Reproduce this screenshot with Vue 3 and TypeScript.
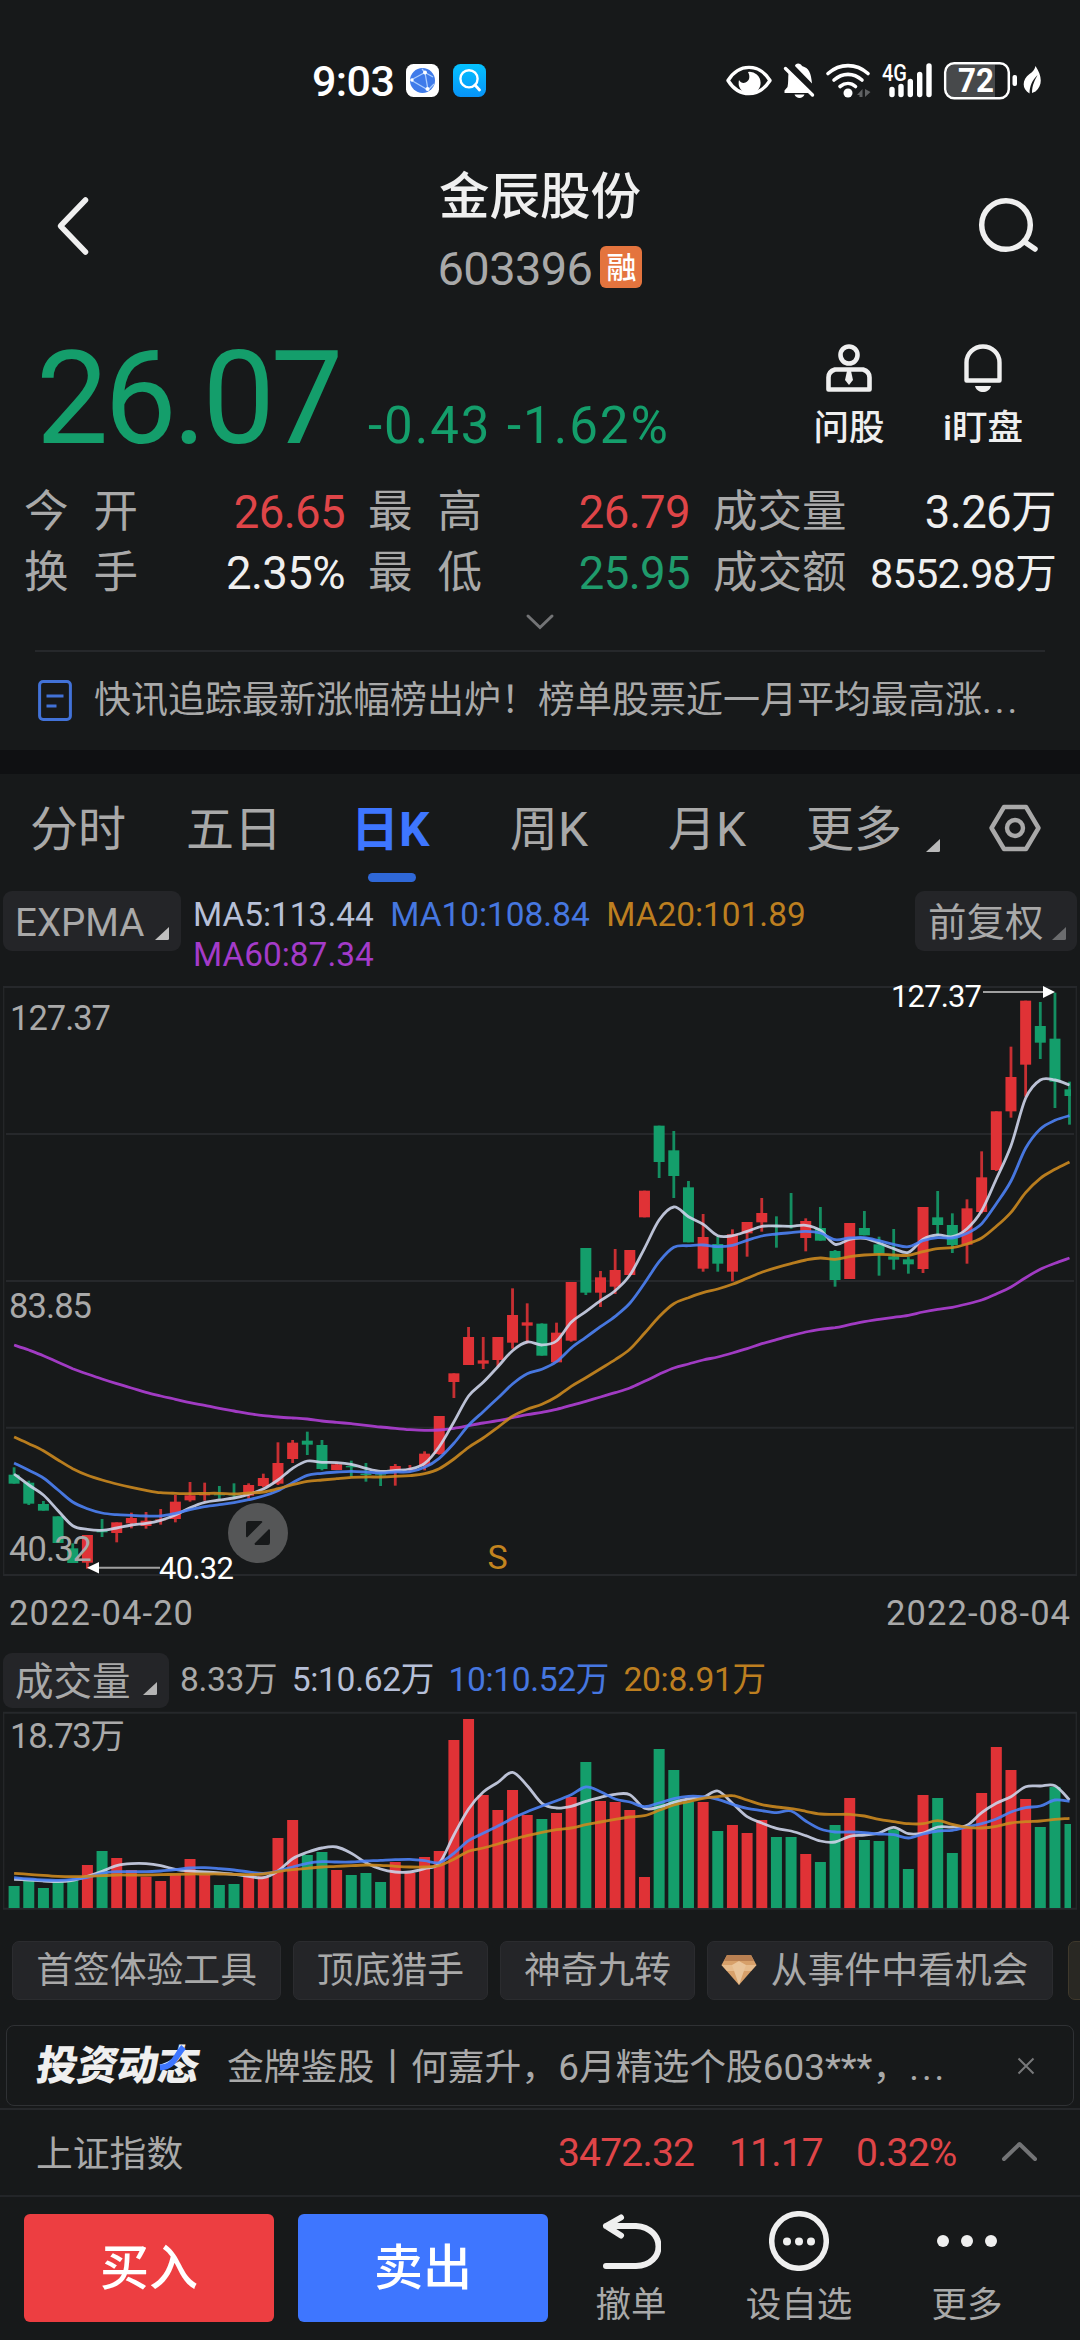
<script setup lang="ts">
type Candle = [rise: 0 | 1, high: number, top: number, bottom: number, low: number]

// Vertical chart values are kept in thirds of a pixel
const UNIT = 3
const PITCH = 14.66
const FIRST_X = 14.1

const candles: Candle[] = [
  [0, 1462, 1484, 1511, 1511], [0, 1502, 1508, 1571, 1575], [0, 1563, 1572, 1592, 1592], [0, 1609, 1609, 1689, 1689],
  [0, 1690, 1705, 1749, 1749], [1, 1665, 1665, 1748, 1766], [0, 1617, 1652, 1657, 1671], [1, 1627, 1627, 1659, 1687],
  [1, 1598, 1614, 1630, 1645], [1, 1596, 1622, 1638, 1646], [1, 1587, 1618, 1621, 1634], [1, 1545, 1565, 1617, 1627],
  [1, 1506, 1546, 1561, 1565], [1, 1508, 1542, 1546, 1562], [0, 1518, 1543, 1546, 1556], [0, 1510, 1543, 1546, 1556],
  [1, 1510, 1515, 1547, 1556], [1, 1481, 1494, 1518, 1522], [1, 1387, 1449, 1511, 1515], [1, 1380, 1388, 1437, 1449],
  [0, 1355, 1382, 1394, 1425], [0, 1380, 1395, 1467, 1471], [1, 1450, 1453, 1470, 1470], [0, 1442, 1458, 1462, 1490],
  [0, 1449, 1481, 1485, 1505], [0, 1480, 1483, 1486, 1518], [1, 1452, 1458, 1476, 1517], [1, 1455, 1467, 1470, 1476],
  [1, 1414, 1421, 1458, 1471], [1, 1308, 1308, 1422, 1424], [1, 1180, 1180, 1206, 1254], [1, 1041, 1071, 1155, 1155],
  [1, 1071, 1141, 1151, 1167], [1, 1071, 1071, 1140, 1160], [1, 925, 1005, 1088, 1106], [1, 970, 1027, 1037, 1090],
  [0, 1030, 1031, 1127, 1127], [1, 1028, 1058, 1147, 1147], [1, 906, 906, 1082, 1085], [0, 804, 804, 938, 945],
  [1, 873, 892, 938, 981], [1, 807, 870, 920, 942], [1, 810, 810, 885, 885], [1, 632, 632, 712, 712],
  [0, 437, 437, 546, 594], [0, 453, 511, 588, 654], [0, 603, 622, 787, 787], [1, 702, 771, 866, 875],
  [0, 770, 792, 851, 875], [1, 748, 763, 875, 904], [1, 726, 726, 760, 830], [1, 654, 699, 727, 755],
  [0, 709, 736, 740, 803], [0, 639, 736, 740, 746], [1, 715, 723, 774, 814], [0, 681, 744, 782, 782],
  [0, 810, 813, 900, 920], [1, 729, 729, 897, 897], [0, 693, 744, 766, 766], [0, 770, 793, 821, 887],
  [0, 747, 829, 839, 869], [0, 830, 838, 853, 881], [1, 681, 681, 867, 879], [0, 633, 712, 735, 765],
  [0, 700, 735, 795, 819], [1, 658, 685, 794, 851], [1, 514, 592, 696, 700], [1, 394, 394, 570, 573],
  [1, 200, 291, 394, 413], [1, 62, 62, 254, 350], [0, 66, 138, 188, 237], [0, 38, 176, 305, 384],
  [0, 305, 328, 348, 434],
]

const volumeTops: number[] = [
  738, 722, 744, 726, 722, 675, 633, 654, 690, 710, 723, 703, 657, 705, 735, 732, 703, 709, 594, 540, 645, 636, 690,
  705, 699, 726, 666, 699, 651, 633, 300, 237, 465, 510, 450, 525, 537, 519, 471, 366, 483, 486, 510, 711, 327, 390,
  485, 486, 573, 555, 579, 540, 591, 591, 642, 666, 555, 474, 600, 603, 568, 687, 465, 474, 639, 562, 459, 321, 390,
  477, 561, 441, 552,
]

const priceLines = [
  {
    color: '#b03fd6',
    points: [1095, 1110, 1127, 1147, 1166, 1182, 1197, 1211, 1224, 1237, 1248, 1258, 1268, 1276, 1285, 1293, 1301, 1307, 1311, 1314, 1317, 1323, 1327, 1331, 1336, 1341, 1345, 1349, 1351, 1350, 1345, 1337, 1329, 1322, 1313, 1304, 1297, 1288, 1276, 1264, 1251, 1238, 1224, 1204, 1183, 1164, 1152, 1140, 1131, 1119, 1106, 1091, 1079, 1067, 1056, 1048, 1043, 1034, 1025, 1018, 1012, 1006, 996, 988, 982, 972, 960, 942, 921, 893, 868, 850, 834],
  },
  {
    color: '#cdd4ea',
    points: [1482, 1515, 1545, 1592, 1637, 1648, 1651, 1644, 1635, 1630, 1621, 1605, 1583, 1567, 1560, 1554, 1543, 1527, 1500, 1465, 1443, 1447, 1448, 1453, 1465, 1474, 1471, 1467, 1450, 1400, 1326, 1248, 1207, 1160, 1112, 1086, 1095, 1083, 1027, 995, 962, 932, 886, 805, 720, 681, 710, 733, 767, 767, 754, 739, 738, 739, 736, 751, 793, 778, 775, 789, 806, 817, 778, 765, 770, 746, 692, 597, 497, 355, 300, 300, 315],
  },
  {
    color: '#4d82f5',
    points: [1449, 1471, 1494, 1530, 1566, 1586, 1599, 1604, 1606, 1608, 1608, 1600, 1589, 1580, 1574, 1568, 1559, 1548, 1532, 1508, 1486, 1480, 1476, 1474, 1476, 1479, 1476, 1475, 1462, 1435, 1390, 1336, 1295, 1254, 1212, 1181, 1168, 1145, 1104, 1072, 1040, 1009, 970, 910, 845, 802, 797, 795, 800, 796, 781, 768, 762, 758, 754, 759, 779, 774, 773, 782, 793, 800, 782, 773, 774, 760, 731, 671, 603, 505, 447, 421, 407],
  },
  {
    color: '#cb881f',
    points: [1371, 1391, 1412, 1440, 1466, 1486, 1500, 1512, 1522, 1531, 1538, 1540, 1541, 1540, 1540, 1542, 1539, 1536, 1526, 1514, 1504, 1500, 1496, 1492, 1491, 1491, 1489, 1487, 1481, 1466, 1437, 1402, 1374, 1342, 1309, 1288, 1273, 1250, 1219, 1193, 1166, 1139, 1108, 1060, 1010, 971, 953, 938, 927, 913, 895, 877, 863, 851, 840, 834, 838, 830, 825, 823, 825, 826, 815, 806, 803, 792, 774, 739, 697, 638, 595, 568, 546],
  },
]

const volumeLines = [
  {
    color: '#cdd4ea',
    points: [718, 720, 723, 725, 721, 709, 694, 677, 671, 671, 677, 688, 693, 696, 699, 703, 709, 713, 693, 656, 637, 624, 621, 640, 668, 687, 696, 696, 686, 670, 585, 507, 456, 427, 397, 437, 490, 504, 499, 484, 472, 463, 464, 505, 501, 487, 477, 472, 453, 490, 530, 549, 565, 573, 587, 603, 606, 589, 585, 579, 562, 581, 579, 561, 561, 556, 518, 490, 470, 440, 438, 437, 480],
  },
  {
    color: '#4d82f5',
    points: [713, 717, 720, 721, 718, 712, 700, 695, 695, 695, 693, 689, 684, 683, 686, 690, 696, 700, 693, 681, 670, 665, 666, 666, 663, 661, 659, 658, 662, 668, 640, 602, 580, 558, 535, 515, 498, 482, 464, 441, 455, 477, 486, 500, 489, 476, 469, 470, 478, 493, 505, 512, 518, 513, 543, 567, 576, 576, 578, 582, 584, 594, 582, 573, 571, 561, 551, 537, 516, 503, 498, 480, 484],
  },
  {
    color: '#cb881f',
    points: [700, 703, 706, 709, 710, 709, 707, 705, 705, 705, 704, 703, 702, 702, 702, 703, 704, 702, 695, 689, 685, 681, 679, 677, 675, 676, 679, 681, 681, 677, 658, 634, 624, 612, 599, 587, 577, 569, 564, 554, 546, 538, 531, 527, 511, 495, 485, 475, 470, 467, 480, 494, 501, 506, 514, 522, 523, 523, 528, 538, 545, 551, 551, 542, 553, 562, 564, 559, 549, 545, 543, 538, 535],
  },
]

const xAt = (i: number): number => Math.min(FIRST_X + PITCH * i, 1069.5)
const widthAt = (i: number): number => (i === candles.length - 1 ? 6.5 : 11)
const leftAt = (i: number): number => (i === candles.length - 1 ? 1064.5 : xAt(i) - 5.5)
const colorOf = (c: Candle): string => (c[0] ? '#e03236' : '#149e6b')

function smoothPath(points: number[]): string {
  const pts = points.map((v, i) => [xAt(i), v / UNIT])
  let d = `M${pts[0][0]} ${pts[0][1]}`
  for (let i = 0; i < pts.length - 1; i++) {
    const before = pts[Math.max(i - 1, 0)]
    const from = pts[i]
    const to = pts[i + 1]
    const after = pts[Math.min(i + 2, pts.length - 1)]
    const c1 = [from[0] + (to[0] - before[0]) / 6, from[1] + (to[1] - before[1]) / 6]
    const c2 = [to[0] - (after[0] - from[0]) / 6, to[1] - (after[1] - from[1]) / 6]
    d += `C${c1.map((n) => n.toFixed(1))} ${c2.map((n) => n.toFixed(1))} ${to[0].toFixed(1)} ${to[1].toFixed(1)}`
  }
  return d
}

const stats = [
  { label: '今开', value: '26.65', tone: 'up', spread: true },
  { label: '最高', value: '26.79', tone: 'up', spread: true },
  { label: '成交量', value: '3.26万', tone: 'plain', spread: false },
  { label: '换手', value: '2.35%', tone: 'plain', spread: true },
  { label: '最低', value: '25.95', tone: 'down', spread: true },
  { label: '成交额', value: '8552.98万', tone: 'plain small', spread: false },
]
const periods = ['分时', '五日', '日K', '周K', '月K', '更多']
const tools = ['首签体验工具', '顶底猎手', '神奇九转']
</script>

<template>
  <main class="screen">
    <div class="status">
      <span class="clock">9:03</span>
      <svg class="app-a" width="33" height="33" viewBox="0 0 33 33">
        <rect width="33" height="33" rx="7.5" fill="#fff" />
        <circle cx="16.5" cy="16.5" r="12.5" fill="#3f7bea" />
        <path d="M5 16 19 8.5 22 26ZM5 16 22 26M19 8.5 27 13M16 5 19 8.5M22 26 28 20" fill="none" stroke="#a9ccff" stroke-width="1.3" />
        <circle cx="19" cy="8.5" r="2" fill="#fff" /><circle cx="6" cy="16" r="1.7" fill="#fff" /><circle cx="21.5" cy="25" r="2" fill="#fff" />
      </svg>
      <svg class="app-b" width="33" height="33" viewBox="0 0 33 33">
        <defs><linearGradient id="sky" x2="0" y2="1"><stop stop-color="#05c2ff" /><stop offset="1" stop-color="#0793f8" /></linearGradient></defs>
        <rect width="33" height="33" rx="7.5" fill="url(#sky)" />
        <circle cx="16" cy="14.8" r="8.6" fill="none" stroke="#fff" stroke-width="2.4" />
        <path d="m22 21 4.5 5" stroke="#fff" stroke-width="2.8" stroke-linecap="round" />
      </svg>
      <svg class="indicators" width="320" height="60" viewBox="721 51 320 60">
        <path d="M727 80.5C738 63 758 63 769 80.5 758 98 738 98 727 80.5Z" fill="none" stroke="#fff" stroke-width="3.4" stroke-linejoin="round" />
        <path d="M747 72a11 11 0 1 1-9 8c1.500 2.500 4 3.500 6.500 2.500 4-1.500 5-6 2.500-10.500Z" fill="#fff" />
        <path d="M794 66c0-3.500 6-3.500 7 0 7 2 9 6.500 10 17.500ZM787.500 73 808 93h-24.500v-2.500l3-3.500c1-4 .5-9 1-14Z" fill="#fff" />
        <path d="m784.500 68.500 27 26.500" stroke="#fff" stroke-width="3.4" stroke-linecap="round" />
        <path d="M793.500 94.500h10c-1.500 4.500-8.500 4.500-10 0Z" fill="#fff" />
        <g fill="none" stroke="#fff" stroke-width="3.600" stroke-linecap="round">
          <path d="M827 73.500c12-10.500 28-10.500 40 0M833 80c8.500-7.500 19.500-7.500 28 0M839 86.500c5-4 11-4 15.500 0" />
        </g>
        <circle cx="847" cy="93" r="4.500" fill="#fff" />
        <path d="m861.500 89-5.500 6h2.500v2h3Zm2.500 0 5.500 3-5.500 5Z" fill="#606264" />
        <text x="881" y="80.500" class="net" textLength="25" lengthAdjust="spacingAndGlyphs">4G</text>
        <g stroke="#fff" stroke-width="5.400" stroke-linecap="round"><path d="M891 89.500v5M900 86.500v8M909.300 81.500v13M918.700 74.500v20M928 66v28.500" /></g>
        <path d="M953 64.500h41v32.500h-41a7 7 0 0 1-7-7V71.500a7 7 0 0 1 7-7Z" fill="#47494b" />
        <rect x="944.200" y="63.200" width="63.600" height="35" rx="9" fill="none" stroke="#fff" stroke-width="2.500" />
        <text x="957" y="92.300" class="battery" textLength="36" lengthAdjust="spacingAndGlyphs">72</text>
        <rect x="1011.500" y="75" width="4.500" height="11" rx="2" fill="#fff" />
        <path d="M1034.500 66c6 9 8 19 0 25.500l-3.500 1.500c0-8 3-13 5.500-18-5 5-8 11-8 18.500-8-4.500-7.500-14 0-19.500 3-2 5-4 6-8Z" fill="#fff" />
      </svg>
    </div>

    <header class="header">
      <svg class="back" width="36" height="62" viewBox="0 0 36 62"><path d="M31.500 5 6.500 31l25 26" fill="none" stroke="#efefef" stroke-width="5.500" stroke-linecap="round" stroke-linejoin="round" /></svg>
      <div class="title">
        <h1>金辰股份</h1>
        <div class="code"><span>603396</span><b>融</b></div>
      </div>
      <svg class="search" width="66" height="62" viewBox="0 0 66 62"><circle cx="29" cy="31" r="24.300" fill="none" stroke="#efefef" stroke-width="5.500" /><path d="m47 47.500 11 7.500" stroke="#efefef" stroke-width="5.500" stroke-linecap="round" /></svg>
    </header>

    <section class="quote">
      <strong class="price">26.07</strong>
      <span class="change first">-0.43</span>
      <span class="change">-1.62%</span>
      <div class="actions">
        <div class="action">
          <svg width="50" height="48" viewBox="0 0 50 48" fill="none" stroke="#efefef" stroke-width="4.600">
            <circle cx="25" cy="11" r="8.500" />
            <path d="M11 25.500h28q6.500 2 6.500 8V45.500h-41v-12q0-6 6.500-8Z" stroke-linejoin="round" />
            <path d="M23 27h4l2 9-4 5-4-5Z" fill="#efefef" stroke="none" />
          </svg>
          <span>问股</span>
        </div>
        <div class="action">
          <svg width="50" height="48" viewBox="0 0 50 48"><path d="M8.500 36.500V18.500a16.500 16 0 0 1 33 0v18Z" fill="none" stroke="#efefef" stroke-width="4.400" stroke-linejoin="round" /><path d="M17 42h16c-2 8-14 8-16 0Z" fill="#efefef" /></svg>
          <span>i盯盘</span>
        </div>
      </div>
    </section>

    <section class="stats">
      <div v-for="s in stats" :key="s.label" class="stat">
        <span class="label" :class="{ spread: s.spread }">{{ s.label }}</span>
        <span class="value" :class="s.tone">{{ s.value }}</span>
      </div>
    </section>
    <div class="expand"><svg width="30" height="18" viewBox="0 0 30 18"><path d="m3 3 12 11.500L27 3" fill="none" stroke="#737476" stroke-width="3" stroke-linecap="round" /></svg></div>

    <section class="news">
      <svg width="34" height="41" viewBox="0 0 34 41"><rect x="1.600" y="1.600" width="30.800" height="37.800" rx="3.500" fill="none" stroke="#4272d8" stroke-width="3" /><path d="M8.500 16h17M8.500 26h10" stroke="#4272d8" stroke-width="3" /></svg>
      <span>快讯追踪最新涨幅榜出炉！榜单股票近一月平均最高涨<i class="dots">...</i></span>
    </section>
    <div class="band"></div>

    <nav class="tabs">
      <span v-for="p in periods" :key="p" class="tab" :class="{ active: p === '日K' }">{{ p }}</span>
      <svg class="more-mark" width="14" height="13" viewBox="0 0 14 13"><path d="M14 0v11.500q0 1.500-1.500 1.500H0Z" fill="#b9b9b9" /></svg>
      <svg class="hex" width="52" height="48" viewBox="0 0 52 48" fill="none" stroke="#a9a9a9"><path d="M15 3h22l12.500 21L37 45H15L2.500 24Z" stroke-width="4.400" stroke-linejoin="round" /><circle cx="26" cy="24" r="8" stroke-width="4.400" /></svg>
    </nav>

    <section class="legend">
      <div class="pill main-pill"><span>EXPMA</span><svg width="14" height="13" viewBox="0 0 14 13"><path d="M14 0v11.500q0 1.500-1.500 1.500H0Z" fill="#c0c0c0" /></svg></div>
      <p class="averages"><span class="c5">MA5:113.44</span><span class="c10">MA10:108.84</span><span class="c20">MA20:101.89</span><span class="c60">MA60:87.34</span></p>
      <div class="pill right-pill"><span>前复权</span><svg width="14" height="13" viewBox="0 0 14 13"><path d="M14 0v11.500q0 1.500-1.500 1.500H0Z" fill="#6b6c6e" /></svg></div>
    </section>

    <svg class="chart" width="1080" height="666" viewBox="0 -6 1080 666">
      <g stroke="#26282b" stroke-width="2" fill="none">
        <path d="M3 7h1074M6 154h1068M6 301h1068M6 447.700h1068M3 595h1074" />
        <path d="M3.700 7v588M1076.300 7v588" stroke-width="1.200" />
      </g>
      <g v-for="(c, i) in candles" :key="i" :fill="colorOf(c)">
        <rect :x="xAt(i) - 1.4" :y="c[1] / UNIT" width="2.8" :height="(c[4] - c[1]) / UNIT" opacity=".88" />
        <rect :x="leftAt(i)" :y="c[2] / UNIT" :width="widthAt(i)" :height="(c[3] - c[2]) / UNIT" />
      </g>
      <path v-for="l in priceLines" :key="l.color" :d="smoothPath(l.points)" :stroke="l.color" class="line" />
      <g class="axis">
        <text x="10" y="50.300" textLength="101">127.37</text>
        <text x="9" y="338" textLength="83">83.85</text>
        <text x="9" y="580.700" textLength="83">40.32</text>
        <text x="9" y="645" textLength="184">2022-04-20</text>
        <text x="886" y="645" textLength="184">2022-08-04</text>
      </g>
      <path d="M983 12h62M99 587.700h61" stroke="#a0a0a0" stroke-width="2" />
      <path d="m1043 6 12 6-12 6ZM99 582l-12 5.700 12 5.800Z" fill="#fff" />
      <g class="extreme">
        <text x="891" y="27" textLength="91">127.37</text>
        <text x="159" y="598.700" textLength="75">40.32</text>
      </g>
      <circle cx="258" cy="553" r="30" fill="#555657" />
      <path d="M246 543.500q0-2.500 2-2.500h13.500l1 1L247 557.500l-1-1ZM270 562.500q0 2.500-2 2.500h-13l-.5-1.500L269 549l1 1Z" fill="#17191a" />
      <text x="487.500" y="588.700" class="sell">S</text>
    </svg>

    <section class="volume-head">
      <div class="pill volume-pill"><span>成交量</span><svg width="14" height="13" viewBox="0 0 14 13"><path d="M14 0v11.500q0 1.500-1.500 1.500H0Z" fill="#b4b4b4" /></svg></div>
      <span class="c0">8.33万</span><span class="c5">5:10.62万</span><span class="c10">10:10.52万</span><span class="c20">20:8.91万</span>
    </section>
    <svg class="chart" width="1080" height="205" viewBox="0 70 1080 205">
      <g stroke="#26282b" fill="none"><path d="M3 72.800h1074M3 268.800h1074" stroke-width="2" /><path d="M3.700 72.800v196M1076.300 72.800v196" stroke-width="1.200" /></g>
      <rect v-for="(t, i) in volumeTops" :key="i" :x="leftAt(i)" :y="t / UNIT" :width="widthAt(i)" :height="(804 - t) / UNIT" :fill="colorOf(candles[i])" />
      <path v-for="l in volumeLines" :key="l.color" :d="smoothPath(l.points)" :stroke="l.color" class="line" />
      <g class="axis"><text x="10" y="107.700" textLength="115">18.73万</text></g>
    </svg>

    <section class="tools">
      <span v-for="t in tools" :key="t" class="tool">{{ t }}</span>
      <span class="tool gem">
        <svg width="36" height="32" viewBox="0 0 36 32"><path d="M6 1h24l5.500 10L18 31 .5 11Z" fill="#d7a06a" /><path d="M6 1h24l3 6H3Z" fill="#b98052" /><path d="M.5 11h35L30 17H6Z" fill="#e6bb8c" /><path d="m11 11 7 20 7-20-7-4Z" fill="#e9c49a" /></svg>
        从事件中看机会
      </span>
      <span class="tool next"></span>
    </section>

    <section class="promo">
      <div class="logo"><span>投资动态</span><svg width="34" height="28" viewBox="0 0 34 28"><path d="M25.500 3C17 13 16 23 2 23.500" fill="none" stroke="#3e76ff" stroke-width="6" /></svg></div>
      <span class="promo-text">金牌鉴股丨何嘉升，6月精选个股603***，<i class="dots">...</i></span>
      <svg class="close" width="18" height="18" viewBox="0 0 18 18"><path d="m1.500 1.500 15 15m0-15-15 15" stroke="#77787a" stroke-width="2" /></svg>
    </section>

    <section class="index">
      <span class="index-name">上证指数</span>
      <span class="up v1">3472.32</span><span class="up v2">11.17</span><span class="up v3">0.32%</span>
      <svg width="37" height="22" viewBox="0 0 37 22"><path d="M3 19 18.500 4 34 19" fill="none" stroke="#737476" stroke-width="4" stroke-linecap="round" stroke-linejoin="round" /></svg>
    </section>

    <footer class="bottom">
      <button class="trade buy">买入</button>
      <button class="trade sell-btn">卖出</button>
      <div class="nav undo">
        <svg width="60" height="60" viewBox="0 0 60 60" fill="none" stroke="#efefef" stroke-width="6" stroke-linecap="round" stroke-linejoin="round"><path d="M5 15h30c30 2 30 39 0 40H5M20 6.500 5 15l15 9.500" /></svg>
        <span>撤单</span>
      </div>
      <div class="nav watch">
        <svg width="60" height="60" viewBox="0 0 60 60"><circle cx="30" cy="30" r="27.300" fill="none" stroke="#efefef" stroke-width="5.500" /><g fill="#efefef"><circle cx="18" cy="30.500" r="4" /><circle cx="30" cy="30.500" r="4" /><circle cx="42" cy="30.500" r="4" /></g></svg>
        <span>设自选</span>
      </div>
      <div class="nav others">
        <svg width="60" height="60" viewBox="0 0 60 60" fill="#efefef"><circle cx="6" cy="30" r="6" /><circle cx="30" cy="30" r="6" /><circle cx="54" cy="30" r="6" /></svg>
        <span>更多</span>
      </div>
    </footer>
  </main>
</template>

<style>
body {
  background: #17191a;
}
</style>

<style scoped>
.screen {
  width: 1080px;
  height: 2340px;
  overflow: hidden;
  display: flex;
  flex-direction: column;
  background: #17191a;
  color: #a9a9a9;
  font-family: Roboto, "Noto Sans CJK SC", sans-serif;
  white-space: nowrap;
}
.screen > * {
  flex: none;
  box-sizing: border-box;
}
svg {
  display: block;
  flex: none;
}
.status {
  height: 161px;
  display: flex;
  align-items: center;
  padding-left: 312px;
}
.clock {
  width: 94px;
  color: #fff;
  font-size: 43px;
  line-height: 50px;
  font-weight: 500;
  letter-spacing: -0.6px;
}
.app-b {
  margin-left: 14px;
}
.indicators {
  margin-left: 236px;
}
.net {
  font: 500 24px Roboto, sans-serif;
  fill: #fff;
}
.battery {
  font: 700 33px Roboto, sans-serif;
  fill: #fff;
}
.header {
  height: 139px;
  display: grid;
  grid-template-columns: 200px 1fr 200px;
}
.back {
  margin: 34px 0 0 54px;
}
.search {
  margin: 33px 0 0 97px;
}
.title {
  padding-top: 9px;
}
.title h1 {
  margin: 0;
  text-align: center;
  color: #efefef;
  font-size: 50.5px;
  line-height: 54px;
  font-weight: 500;
}
.code {
  display: flex;
  align-items: center;
  justify-content: center;
  height: 42px;
  margin-top: 22px;
  font-size: 47px;
  letter-spacing: -0.6px;
}
.code span {
  line-height: 42px;
  margin-top: 4px;
}
.code b {
  width: 42px;
  height: 42px;
  margin-left: 8px;
  border-radius: 6px;
  background: #e4743e;
  color: #fff;
  font-size: 30px;
  line-height: 43px;
  font-weight: 500;
  text-align: center;
  letter-spacing: 0;
}
.quote {
  height: 180px;
  display: flex;
  align-items: baseline;
  padding: 34px 30px 0 36px;
  color: #149e6b;
}
.price {
  width: 332px;
  font-size: 129px;
  line-height: 130px;
  font-weight: 400;
  letter-spacing: -4.2px;
}
.change {
  font-size: 51px;
  letter-spacing: 2px;
}
.change.first {
  width: 139px;
}
.actions {
  display: flex;
  align-self: flex-start;
  margin: 10px 0 0 auto;
}
.action {
  width: 134px;
  display: flex;
  flex-direction: column;
  align-items: center;
  color: #efefef;
  font-size: 35.5px;
  line-height: 40px;
  font-weight: 500;
}
.action span {
  margin-top: 16px;
}
.stats {
  height: 122px;
  display: grid;
  grid-template-columns: 321px 322px 343px;
  grid-auto-rows: 61px;
  column-gap: 23px;
  padding-left: 24px;
}
.stat {
  display: flex;
  align-items: center;
  justify-content: space-between;
  line-height: 61px;
  padding-top: 3px;
}
.label {
  font-size: 44.5px;
}
.spread {
  letter-spacing: 25px;
}
.value {
  font-size: 45.5px;
  letter-spacing: -0.6px;
}
.plain {
  color: #efefef;
}
.small {
  font-size: 41.5px;
  letter-spacing: -0.8px;
}
.up {
  color: #df4548;
}
.down {
  color: #1f9b6c;
}
.expand {
  height: 48px;
  display: flex;
  justify-content: center;
  padding-top: 11px;
}
.news {
  height: 100px;
  margin: 0 35px;
  padding-left: 3px;
  border-top: 2px solid #26282b;
  display: flex;
  align-items: center;
  font-size: 37px;
}
.news svg {
  margin-top: -2px;
}
.news span {
  margin: -9px 0 0 22px;
}
.dots {
  font-style: normal;
  letter-spacing: 3px;
}
.band {
  height: 24px;
  background: #0f1012;
}
.tabs {
  height: 117px;
  padding-left: 30px;
  display: grid;
  grid-template-columns: 156px 169px 155px 158px 138px 120px 63px 52px;
  font-size: 48px;
  line-height: 111px;
}
.tab.active {
  position: relative;
  left: -4px;
  color: #3e76ff;
  font-weight: 700;
}
.tab.active::after {
  content: "";
  position: absolute;
  left: 17px;
  top: 99px;
  width: 48px;
  height: 9px;
  border-radius: 5px;
  background: #2f68d8;
}
.more-mark {
  margin-top: 65px;
}
.hex {
  margin-top: 30px;
}
.legend {
  height: 83px;
  display: flex;
  padding: 0 3px;
}
.pill {
  box-sizing: border-box;
  height: 60px;
  border-radius: 9px;
  background: #242528;
  display: flex;
  font-size: 38.5px;
  line-height: 64px;
}
.pill svg {
  margin: 36px 0 0 auto;
}
.main-pill {
  width: 178px;
  padding: 0 12px;
}
.right-pill {
  width: 162px;
  margin-left: auto;
  padding: 0 11px 0 13px;
}
.averages {
  width: 640px;
  margin: 4px 0 0 12px;
  display: flex;
  flex-wrap: wrap;
  align-content: flex-start;
  column-gap: 16.5px;
  font-size: 33.4px;
  line-height: 40px;
}
.c5 {
  color: #b7c0d8;
}
.c10 {
  color: #4677e0;
}
.c20 {
  color: #bd7f20;
}
.c60 {
  color: #a43bc9;
}
.line {
  fill: none;
  stroke-width: 2.8;
  opacity: 0.9;
}
.axis {
  font-size: 34.5px;
  fill: #a9a9a9;
}
.extreme {
  font-size: 31px;
  fill: #fff;
}
.sell {
  font-size: 34px;
  fill: #c3841f;
}
.volume-head {
  height: 70px;
  padding: 13px 0 0 3px;
  display: flex;
  font-size: 33.6px;
  line-height: 53px;
  letter-spacing: -0.35px;
}
.volume-pill {
  width: 166px;
  height: 55px;
  padding: 0 12px;
  font-size: 38.5px;
  line-height: 57px;
  letter-spacing: 0;
  margin-right: 11px;
}
.volume-pill svg {
  margin-top: 29px;
}
.volume-head > span {
  margin-right: 14.5px;
}
.tools {
  height: 84px;
  padding: 26px 0 0 12px;
  display: flex;
  gap: 11.5px;
}
.tool {
  box-sizing: border-box;
  flex: none;
  height: 59px;
  padding: 0 23.2px;
  border: 1px solid #2b2c2f;
  border-radius: 7px;
  background: #242528;
  font-size: 36.8px;
  line-height: 58px;
}
.gem {
  display: flex;
  width: 346px;
  padding: 0 0 0 13px;
}
.gem svg {
  margin: 12px 14px 0 0;
}
.next {
  margin-left: 4px;
  width: 60px;
  background: #292823;
  border-color: #3f392c;
}
.promo {
  height: 81px;
  margin: 26px 6px 0 6px;
  padding: 0 38px 0 30px;
  border: 1.5px solid #2f3134;
  border-radius: 8px;
  display: flex;
  align-items: center;
  font-size: 36.8px;
}
.promo-text {
  margin-top: -4px;
}
.logo {
  position: relative;
  width: 190px;
  color: #efefef;
  font-size: 41px;
  line-height: 44px;
  font-weight: 900;
}
.logo span {
  display: inline-block;
  transform: skewX(-9deg);
  letter-spacing: -0.6px;
}
.logo svg {
  position: absolute;
  left: 121px;
  top: 0;
}
.close {
  margin-left: auto;
}
.index {
  height: 87px;
  margin-top: 2px;
  padding: 0 42px 0 36px;
  border-top: 2px solid #26282b;
  display: flex;
  align-items: center;
  font-size: 36.8px;
}
.index .up {
  font-size: 39px;
  letter-spacing: -0.8px;
}
.index-name {
  width: 522px;
  margin-top: -3px;
}
.v1 {
  width: 171px;
}
.v2 {
  width: 127px;
}
.index svg {
  margin: -3px 0 0 auto;
}
.bottom {
  height: 145px;
  padding: 0 0 0 24px;
  border-top: 2px solid #232528;
  display: flex;
}
.trade {
  width: 250px;
  height: 108px;
  margin: 17px 24px 0 0;
  padding: 2px 0 0;
  border: 0;
  border-radius: 6px;
  color: #fff;
  font: 500 49px / 106px Roboto, "Noto Sans CJK SC", sans-serif;
}
.buy {
  background: #ed3e41;
}
.sell-btn {
  background: #3e76ff;
}
.nav {
  display: flex;
  flex-direction: column;
  align-items: center;
  padding-top: 14px;
  font-size: 35.5px;
  line-height: 40px;
}
.nav span {
  margin-top: 14px;
}
.undo {
  width: 120px;
  margin-left: -1px;
}
.watch {
  width: 120px;
  margin-left: 48px;
}
.others {
  width: 120px;
  margin-left: 48px;
}
</style>
